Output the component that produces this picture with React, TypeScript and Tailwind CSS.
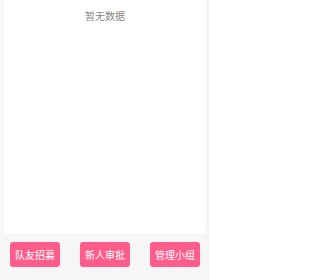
export default function App() {
  const actions = ['队友招募', '新人审批', '管理小组'];

  return (
    <div
      className="w-[210px] h-[280px] flex flex-col bg-[#f6f6f6]"
      style={{ fontFamily: '"Noto Sans CJK SC", "Noto Sans", sans-serif' }}
    >
      <div className="mx-[4px] h-[234px] bg-white rounded-b-[4px] shadow-[0_0_2px_rgba(0,0,0,0.04)] flex justify-center pt-[10px]">
        <span className="text-[10px] leading-[12px] text-[#888]">暂无数据</span>
      </div>
      <div className="flex justify-around mt-[8px]">
        {actions.map((label) => (
          <button
            key={label}
            className="w-[50px] h-[25px] rounded-[3px] bg-[#fe5d8b] text-white text-[10px] leading-[25px] text-center"
          >
            {label}
          </button>
        ))}
      </div>
    </div>
  );
}
